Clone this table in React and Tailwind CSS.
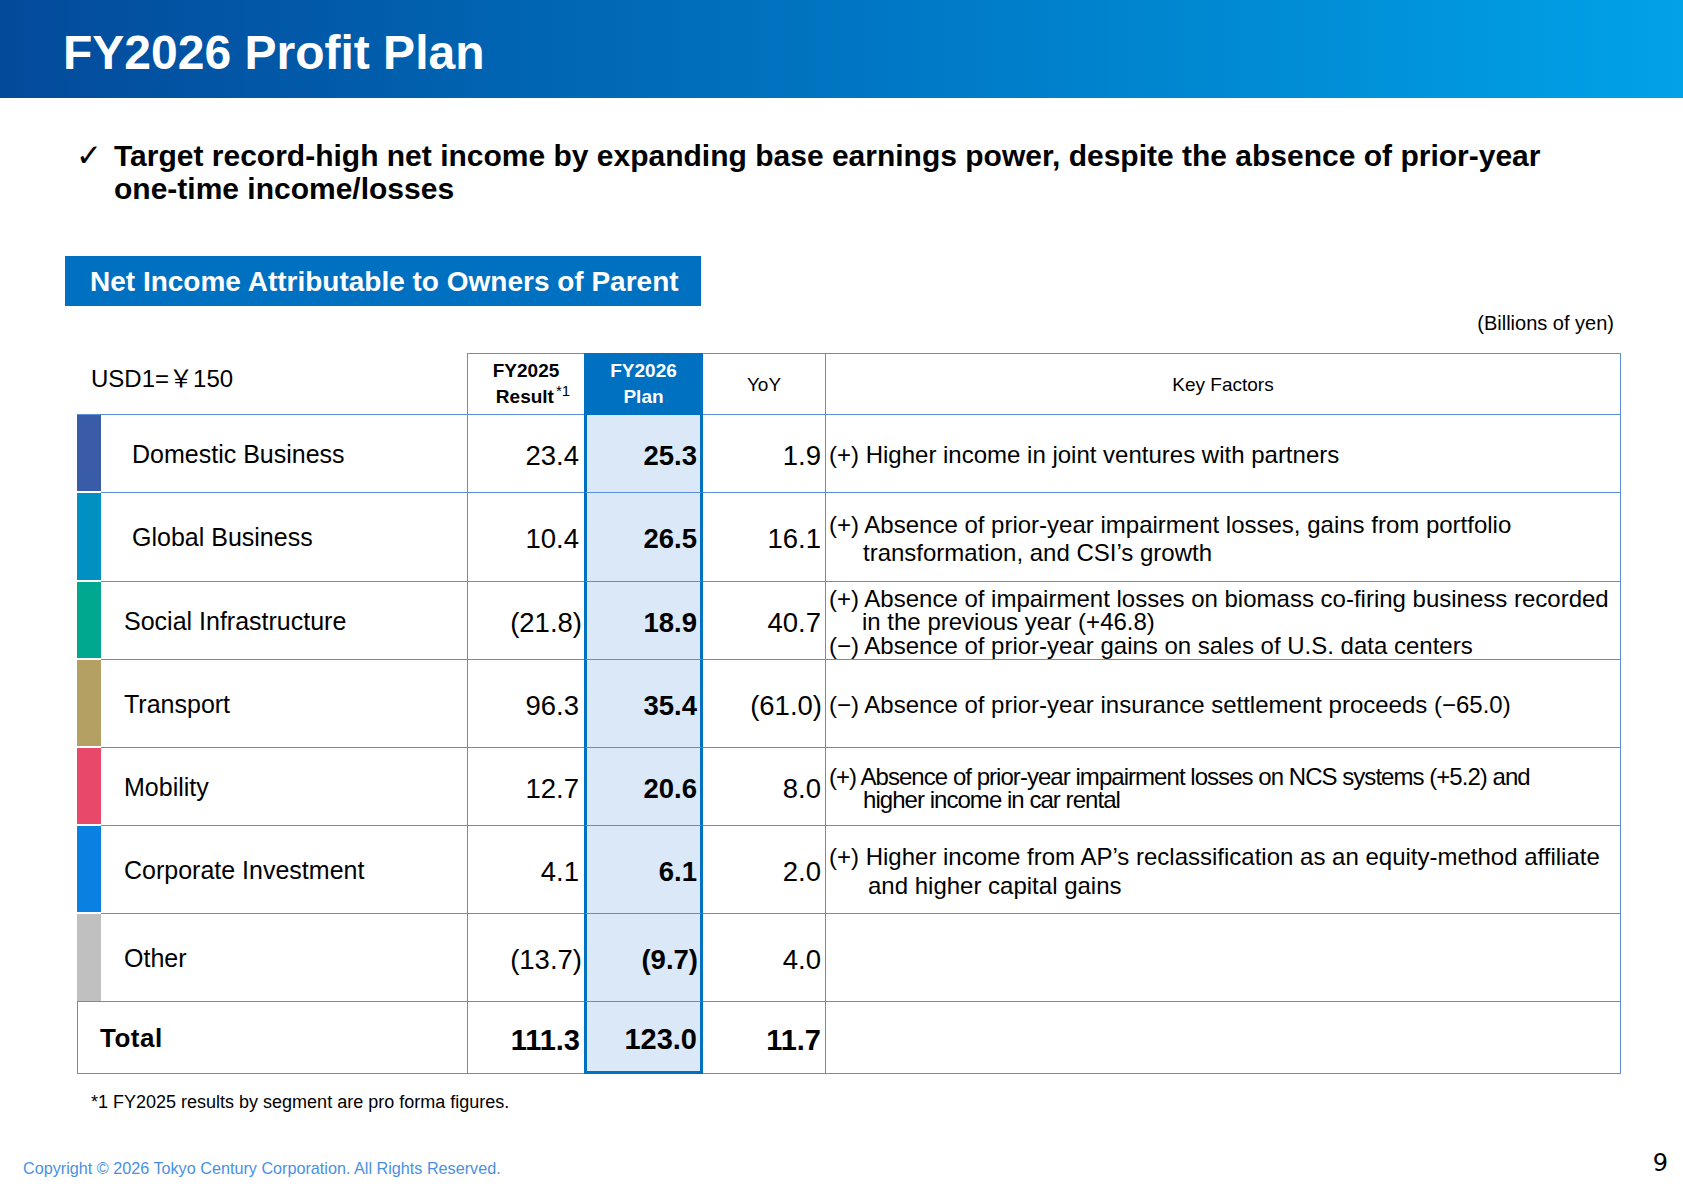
const LINE = "border-[#5b8fd8]";

const rows = [
  {
    label: "Domestic Business",
    bar: "bg-[#3a5ca8]",
    labelPad: "pl-[31px]",
    h: "h-[78px]",
    a: "23.4",
    b: "25.3",
    c: "1.9",
    lh: "leading-[28px]",
    lines: [{ t: "(+) Higher income in joint ventures with partners" }],
  },
  {
    label: "Global Business",
    bar: "bg-[#0091c2]",
    labelPad: "pl-[31px]",
    h: "h-[89px]",
    a: "10.4",
    b: "26.5",
    c: "16.1",
    lh: "leading-[28px]",
    lines: [
      { t: "(+) Absence of prior-year impairment losses, gains from portfolio" },
      { t: "transformation, and CSI’s growth", ind: "pl-[34px]" },
    ],
  },
  {
    label: "Social Infrastructure",
    bar: "bg-[#00a88f]",
    labelPad: "pl-[23px]",
    h: "h-[78px]",
    a: "(21.8)",
    b: "18.9",
    c: "40.7",
    lh: "leading-[23.5px]",
    lines: [
      { t: "(+) Absence of impairment losses on biomass co-firing business recorded" },
      { t: "in the previous year (+46.8)", ind: "pl-[33px]" },
      { t: "(−) Absence of prior-year gains on sales of U.S. data centers" },
    ],
  },
  {
    label: "Transport",
    bar: "bg-[#b5a064]",
    labelPad: "pl-[23px]",
    h: "h-[88px]",
    a: "96.3",
    b: "35.4",
    c: "(61.0)",
    lh: "leading-[28px]",
    lines: [{ t: "(−) Absence of prior-year insurance settlement proceeds (−65.0)" }],
  },
  {
    label: "Mobility",
    bar: "bg-[#e8486a]",
    labelPad: "pl-[23px]",
    h: "h-[78px]",
    a: "12.7",
    b: "20.6",
    c: "8.0",
    lh: "leading-[23px] tracking-[-0.04em]",
    lines: [
      { t: "(+) Absence of prior-year impairment losses on NCS systems (+5.2) and" },
      { t: "higher income in car rental", ind: "pl-[34px]" },
    ],
  },
  {
    label: "Corporate Investment",
    bar: "bg-[#0a80e0]",
    labelPad: "pl-[23px]",
    h: "h-[88px]",
    a: "4.1",
    b: "6.1",
    c: "2.0",
    lh: "leading-[29px]",
    lines: [
      { t: "(+) Higher income from AP’s reclassification as an equity-method affiliate" },
      { t: "and higher capital gains", ind: "pl-[39px]" },
    ],
  },
  {
    label: "Other",
    bar: "bg-[#c0c0c0]",
    labelPad: "pl-[23px]",
    h: "h-[87px]",
    last: true,
    a: "(13.7)",
    b: "(9.7)",
    c: "4.0",
    lh: "leading-[28px]",
    lines: [],
  },
];

const isParen = (v) => v.startsWith("(");

function Row({ r }) {
  const bb = r.last ? "" : "border-b";
  return (
    <div className={`grid grid-cols-[24px_366px_117px_119px_122px_796px] ${r.h}`}>
      <div className={`${r.bar} ${r.last ? "" : "mb-[2px]"}`} />
      <div className={`${bb} ${LINE} flex items-center ${r.labelPad} text-[25px] leading-[30px]`}>
        {r.label}
      </div>
      <div
        className={`${bb} border-l ${LINE} flex items-center justify-end pt-[4px] ${
          isParen(r.a) ? "pr-[2px]" : "pr-[5px]"
        } text-[27.5px] leading-[32px]`}
      >
        {r.a}
      </div>
      <div
        className={`${bb} border-b-[#5b8fd8] border-x-[3px] border-x-[#0070c0] bg-[#dae8f8] flex items-center justify-end pt-[4px] ${
          isParen(r.b) ? "pr-[2px]" : "pr-[3px]"
        } text-[27.5px] leading-[32px] font-bold`}
      >
        {r.b}
      </div>
      <div
        className={`${bb} ${LINE} flex items-center justify-end pt-[4px] ${
          isParen(r.c) ? "pr-[3px]" : "pr-[4px]"
        } text-[27.5px] leading-[32px]`}
      >
        {r.c}
      </div>
      <div className={`${bb} border-x ${LINE} flex flex-col justify-center pt-[3px] pl-[3px] text-[24px] ${r.lh}`}>
        {r.lines.map((l, i) => (
          <div key={i} className={`whitespace-nowrap ${l.ind || ""}`}>
            {l.t}
          </div>
        ))}
      </div>
    </div>
  );
}

export default function App() {
  return (
    <div className="w-[1683px] h-[1190px] bg-white flex flex-col font-['Liberation_Sans',Arial,sans-serif] text-black overflow-hidden">
      <header className="h-[98px] shrink-0 bg-linear-to-r from-[#044a9b] to-[#00a2e8] pl-[63px] pt-[29px]">
        <h1 className="text-[48px] leading-[48px] font-bold text-white">FY2026 Profit Plan</h1>
      </header>

      <div className="mt-[41px] flex pl-[76px]">
        <span className="w-[38px] h-[33px] shrink-0 font-['DejaVu_Sans',sans-serif] text-[31px] leading-[33px]">✓</span>
        <p className="text-[30px] leading-[33px] font-bold">
          Target record-high net income by expanding base earnings power, despite the absence of prior-year
          <br />
          one-time income/losses
        </p>
      </div>

      <div className="mt-[51px] ml-[65px] w-[636px] h-[50px] shrink-0 bg-[#0070c0] flex items-center pl-[25px] pt-[2px]">
        <span className="text-white font-bold text-[28px] leading-[32px] whitespace-nowrap">
          Net Income Attributable to Owners of Parent
        </span>
      </div>

      <div className="mt-[6px] pr-[69px] text-right text-[20px] leading-[23px]">(Billions of yen)</div>

      <div className="mt-[18px] ml-[77px] w-[1544px] shrink-0">
        {/* header */}
        <div className="grid grid-cols-[390px_117px_119px_122px_796px] h-[62px]">
          <div className={`border-b ${LINE} pl-[14px] pt-[10px] text-[24px] leading-[28px]`}>
            USD1=<span className="font-['Noto_Sans_CJK_JP',sans-serif]">￥</span>150
          </div>
          <div
            className={`border-t border-l border-b ${LINE} flex flex-col items-center justify-center text-[19px] leading-[26px] font-bold`}
          >
            <span>FY2025</span>
            <span className="pl-[14px]">
              Result<sup className="font-normal text-[15px] ml-[2px] -top-[7px]">*1</sup>
            </span>
          </div>
          <div className="bg-[#0070c0] text-white flex flex-col items-center justify-center text-[19px] leading-[26px] font-bold">
            <span>FY2026</span>
            <span>Plan</span>
          </div>
          <div className={`border-t border-b ${LINE} flex items-center justify-center pt-[2px] text-[19px] leading-[24px]`}>
            YoY
          </div>
          <div
            className={`border-t border-b border-x ${LINE} flex items-center justify-center pt-[2px] text-[19px] leading-[24px]`}
          >
            Key Factors
          </div>
        </div>

        {rows.map((r) => (
          <Row key={r.label} r={r} />
        ))}

        {/* total */}
        <div className="grid grid-cols-[390px_117px_119px_122px_796px] h-[73px]">
          <div className={`border-t border-b border-l ${LINE} flex items-center pl-[22px] pt-[2px] text-[26px] font-bold tracking-[0.02em]`}>
            Total
          </div>
          <div className={`border-t border-b border-l ${LINE} flex items-center justify-end pt-[5px] pr-[4px] text-[29px] leading-[32px] font-bold`}>
            111.3
          </div>
          <div className="border-t border-t-[#5b8fd8] border-x-[3px] border-b-[3px] border-x-[#0070c0] border-b-[#0070c0] bg-[#dae8f8] flex items-center justify-end pt-[5px] pr-[3px] text-[29px] leading-[32px] font-bold">
            123.0
          </div>
          <div className={`border-t border-b ${LINE} flex items-center justify-end pt-[5px] pr-[4px] text-[29px] leading-[32px] font-bold`}>
            11.7
          </div>
          <div className={`border-t border-b border-x ${LINE}`} />
        </div>
      </div>

      <div className="mt-[17px] pl-[91px] text-[18px] leading-[22px]">
        *1 FY2025 results by segment are pro forma figures.
      </div>

      <div className="mt-auto h-[42px] shrink-0 flex items-start justify-between pl-[23px] pr-[15px]">
        <div className="mt-[10px] text-[16.2px] leading-[20px] text-[#4a90e2]">
          Copyright © 2026 Tokyo Century Corporation. All Rights Reserved.
        </div>
        <div className="mt-[2px] font-['DejaVu_Sans',sans-serif] text-[24px] leading-[26px]">9</div>
      </div>
    </div>
  );
}
